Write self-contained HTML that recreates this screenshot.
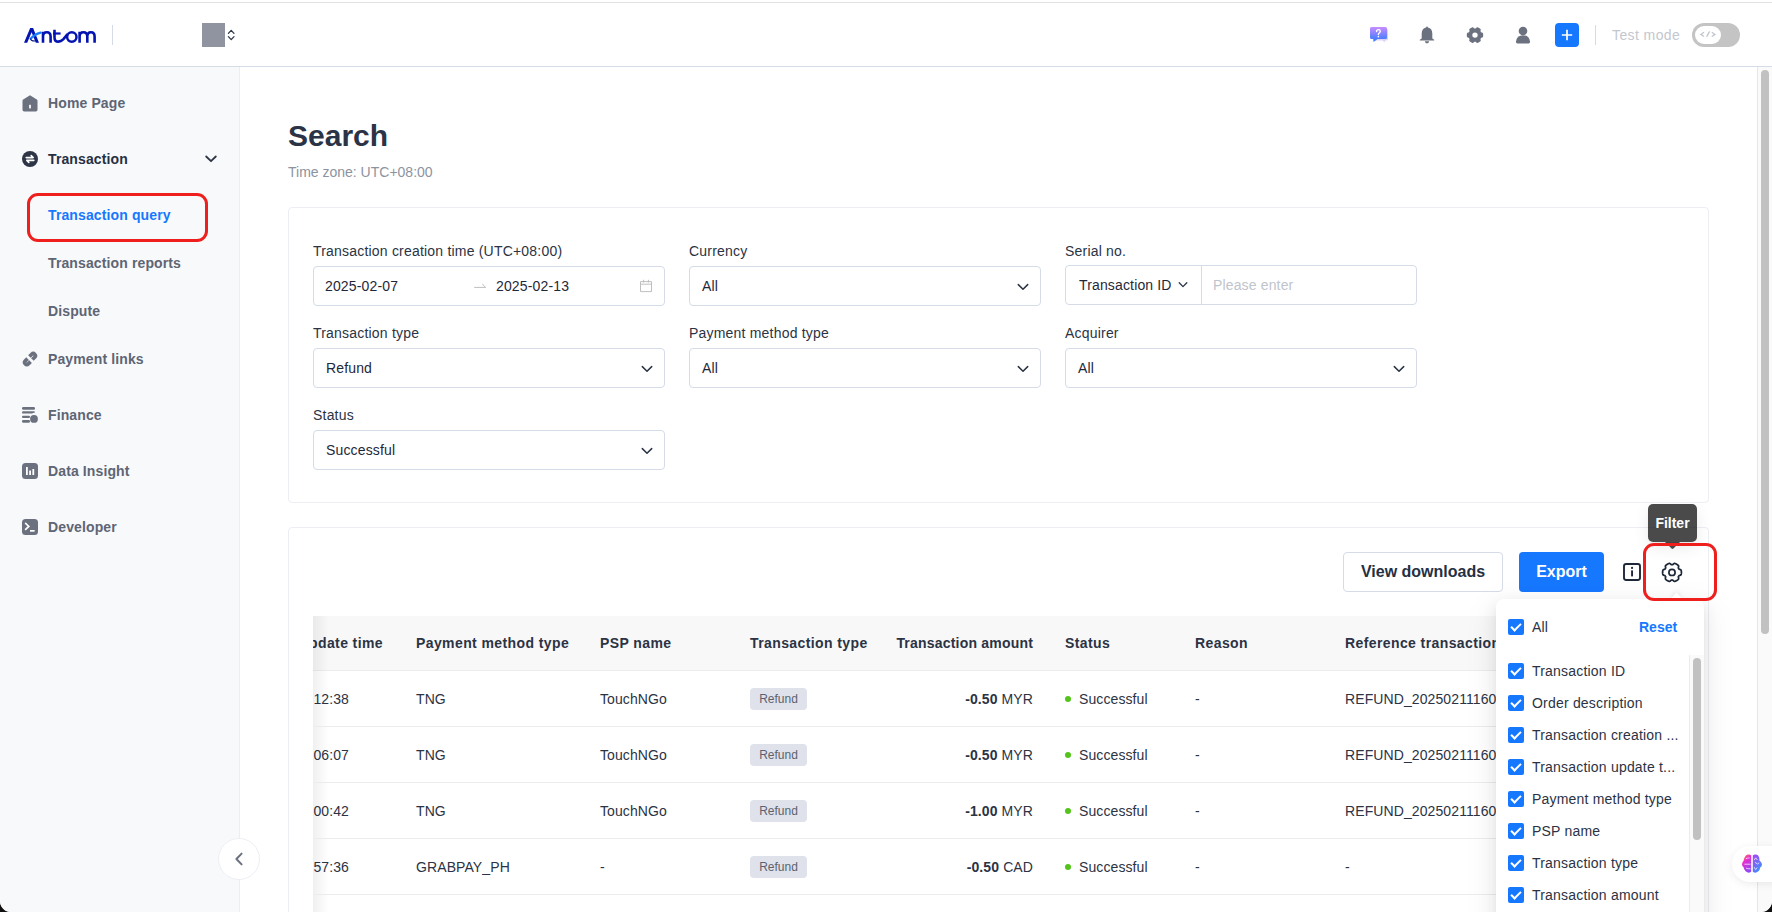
<!DOCTYPE html>
<html><head><meta charset="utf-8">
<style>
*{box-sizing:border-box;margin:0;padding:0}
html,body{width:1772px;height:912px;overflow:hidden;background:#111}
body{font-family:"Liberation Sans",sans-serif;color:#273142;position:relative}
.win{position:absolute;left:0;top:0;width:1772px;height:912px;background:#fff;border-radius:0 0 11px 11px;overflow:hidden}
.a{position:absolute;white-space:nowrap}
.t14{font-size:14px;line-height:22px}
.b{font-weight:bold}
svg{position:absolute;overflow:visible}
/* header */
.topline{position:absolute;left:0;top:2px;width:1772px;height:1px;background:#e0e2e0}
.hdr-border{position:absolute;left:0;top:66px;width:1772px;height:1px;background:#d6dce7}
/* sidebar */
.side{position:absolute;left:0;top:67px;width:240px;height:845px;background:#f8f9fb;border-right:1px solid #eceef2}
.nav{position:absolute;left:48px;letter-spacing:0.12px;font-size:14px;line-height:22px;font-weight:bold;color:#5e6574;white-space:nowrap}
/* inputs */
.inp{position:absolute;height:40px;border:1px solid #d5dce8;border-radius:4px;background:#fff}
.lbl{position:absolute;letter-spacing:0.2px;font-size:14px;line-height:22px;color:#2b3344;white-space:nowrap}
.val{position:absolute;letter-spacing:0.15px;font-size:14px;line-height:22px;color:#1f2838;white-space:nowrap}
.card{position:absolute;border:1px solid #eceef3;border-radius:4px;background:#fff}
.th{position:absolute;top:632px;letter-spacing:0.4px;font-size:14px;line-height:22px;font-weight:bold;color:#2b3344;white-space:nowrap}
.td{position:absolute;letter-spacing:0.1px;font-size:14px;line-height:22px;color:#2b3344;white-space:nowrap}
.tag{position:absolute;left:750px;width:57px;height:22px;background:#dfe2ea;border-radius:4px;font-size:12px;line-height:22px;color:#5b6270;text-align:center}
.dot{position:absolute;left:1065px;width:6px;height:6px;border-radius:50%;background:#52c41a}
.rowb{position:absolute;left:313px;width:1371px;height:1px;background:#ececee}
.cb{position:absolute;left:1508px;width:16px;height:16px;background:#1677ff;border-radius:2px}
.cb:after{content:"";position:absolute;left:3px;top:3.8px;width:8px;height:4px;border-left:2px solid #fff;border-bottom:2px solid #fff;transform:rotate(-45deg)}
.dl{position:absolute;left:1532px;letter-spacing:0.2px;font-size:14px;line-height:22px;color:#2b3344;white-space:nowrap}
</style></head>
<body><div class="win">
<div class="topline"></div>
<div class="hdr-border"></div>
<!-- logo -->
<svg style="left:0;top:0" width="110" height="60" viewBox="0 0 110 60">
<path d="M24 42.8 L30.2 28.1 H33.1 L39 42.8 H35.8 L31.6 32.3 L27.2 42.8 Z" fill="#0414b0"/>
<path d="M30.6 38.7 Q34.5 34.2 40.6 32.6" stroke="#1a7cff" stroke-width="2.2" fill="none" stroke-linecap="round"/>
<path d="M30.6 38.6 Q30.6 41.2 35.4 40.9" stroke="#051580" stroke-width="1.1" fill="none"/>
<path d="M43 42.8 V31.8 M43 36.4 Q43 32.2 46.8 32.2 Q50.6 32.2 50.6 36.4 V42.8" stroke="#0414b0" stroke-width="2.6" fill="none"/>
<path d="M54.5 29.8 V37.4 Q54.5 41.6 58.4 41.6 Q61 41.6 63.2 39.4 L67.6 34.2" stroke="#0414b0" stroke-width="2.6" fill="none"/>
<path d="M53 33.5 H60.6" stroke="#0414b0" stroke-width="2.2" fill="none"/>
<circle cx="71.8" cy="37" r="4.7" stroke="#0414b0" stroke-width="2.5" fill="none"/>
<path d="M79.6 42.8 V31.8 M79.6 36.4 Q79.6 32.2 83.4 32.2 Q87.3 32.2 87.3 36.4 V42.8 M87.3 36.4 Q87.3 32.2 91 32.2 Q94.6 32.2 94.6 36.4 V42.8" stroke="#0414b0" stroke-width="2.6" fill="none"/>
</svg>
<div style="position:absolute;left:112px;top:25px;width:1px;height:20px;background:#d6dce7"></div>
<div style="position:absolute;left:202px;top:23px;width:23px;height:24px;background:#9094a0"></div>
<svg style="left:226px;top:28px" width="10" height="14" viewBox="0 0 10 14"><path d="M2.4 5.4 L5.2 2.3 L8 5.4 M2.4 8.6 L5.2 11.7 L8 8.6" stroke="#303646" stroke-width="1.25" fill="none" stroke-linecap="round" stroke-linejoin="round"/></svg>
<!-- help icon -->
<svg style="left:1366px;top:22px" width="26" height="26" viewBox="0 0 26 26"><defs><linearGradient id="hg" x1="0" y1="0" x2="0" y2="1"><stop offset="0" stop-color="#c88cff"/><stop offset="1" stop-color="#2a7bff"/></linearGradient></defs>
<path d="M9 7 H20.6 Q22 7 22 8.4 V17.2 Q22 18.6 20.6 18.6 H19.4 L18.2 20.4 L16.8 18.6 H9Z" fill="#ddd2f6"/>
<path d="M5.5 5 H19.5 Q21 5 21 6.5 V15.4 Q21 16.9 19.5 16.9 H11.5 L7.6 20 L7.2 16.9 H5.5 Q4 16.9 4 15.4 V6.5 Q4 5 5.5 5Z" fill="url(#hg)"/>
<path d="M10.6 9.6 Q10.6 7.6 12.5 7.6 Q14.3 7.6 14.3 9.3 Q14.3 10.4 13.2 11 Q12.4 11.5 12.4 12.6" stroke="#fff" stroke-width="1.4" fill="none" stroke-linecap="round"/><circle cx="12.4" cy="14.6" r="0.85" fill="#fff"/></svg>
<!-- bell -->
<svg style="left:1419px;top:26px" width="16" height="18" viewBox="0 0 16 18"><path d="M8 0.6 Q8.9 0.6 8.9 1.6 Q13.3 2.6 13.3 7.6 V12.4 L15.2 13.8 Q15.6 14.3 15 14.5 H1 Q0.4 14.3 0.8 13.8 L2.7 12.4 V7.6 Q2.7 2.6 7.1 1.6 Q7.1 0.6 8 0.6Z" fill="#6b717e"/><path d="M5.8 15.3 H10.2 Q10 17.4 8 17.4 Q6 17.4 5.8 15.3Z" fill="#6b717e"/></svg>
<!-- gear solid -->
<svg style="left:1465px;top:25px" width="20" height="20" viewBox="0 0 20 20"><path d="M18.20 10.10 L18.20 9.89 L18.19 9.67 L18.17 9.46 L18.16 9.24 L18.13 9.03 L18.10 8.82 L18.06 8.61 L18.02 8.40 L17.95 8.19 L17.81 8.01 L17.60 7.85 L17.33 7.72 L17.01 7.62 L16.69 7.53 L16.39 7.45 L16.16 7.36 L16.05 7.22 L15.97 7.06 L15.89 6.90 L15.80 6.75 L15.71 6.60 L15.62 6.45 L15.52 6.31 L15.46 6.13 L15.49 5.89 L15.57 5.59 L15.66 5.27 L15.72 4.95 L15.75 4.65 L15.72 4.38 L15.63 4.17 L15.49 4.01 L15.33 3.86 L15.16 3.73 L14.99 3.59 L14.82 3.47 L14.64 3.34 L14.47 3.22 L14.28 3.11 L14.10 3.00 L13.91 2.89 L13.72 2.79 L13.53 2.70 L13.34 2.61 L13.14 2.52 L12.94 2.44 L12.74 2.37 L12.53 2.30 L12.32 2.26 L12.09 2.29 L11.85 2.39 L11.60 2.57 L11.36 2.78 L11.12 3.02 L10.90 3.24 L10.71 3.39 L10.53 3.42 L10.35 3.41 L10.18 3.40 L10.00 3.40 L9.82 3.40 L9.65 3.41 L9.47 3.42 L9.29 3.39 L9.10 3.24 L8.88 3.02 L8.64 2.78 L8.40 2.57 L8.15 2.39 L7.91 2.29 L7.68 2.26 L7.47 2.30 L7.26 2.37 L7.06 2.44 L6.86 2.52 L6.66 2.61 L6.47 2.70 L6.28 2.79 L6.09 2.89 L5.90 3.00 L5.72 3.11 L5.53 3.22 L5.36 3.34 L5.18 3.47 L5.01 3.59 L4.84 3.73 L4.67 3.86 L4.51 4.01 L4.37 4.17 L4.28 4.38 L4.25 4.65 L4.28 4.95 L4.34 5.27 L4.43 5.59 L4.51 5.89 L4.54 6.13 L4.48 6.31 L4.38 6.45 L4.29 6.60 L4.20 6.75 L4.11 6.90 L4.03 7.06 L3.95 7.22 L3.84 7.36 L3.61 7.45 L3.31 7.53 L2.99 7.62 L2.67 7.72 L2.40 7.85 L2.19 8.01 L2.05 8.19 L1.98 8.40 L1.94 8.61 L1.90 8.82 L1.87 9.03 L1.84 9.24 L1.83 9.46 L1.81 9.67 L1.80 9.89 L1.80 10.10 L1.80 10.31 L1.81 10.53 L1.83 10.74 L1.84 10.96 L1.87 11.17 L1.90 11.38 L1.94 11.59 L1.98 11.80 L2.05 12.01 L2.19 12.19 L2.40 12.35 L2.67 12.48 L2.99 12.58 L3.31 12.67 L3.61 12.75 L3.84 12.84 L3.95 12.98 L4.03 13.14 L4.11 13.30 L4.20 13.45 L4.29 13.60 L4.38 13.75 L4.48 13.89 L4.54 14.07 L4.51 14.31 L4.43 14.61 L4.34 14.93 L4.28 15.25 L4.25 15.55 L4.28 15.82 L4.37 16.03 L4.51 16.19 L4.67 16.34 L4.84 16.47 L5.01 16.61 L5.18 16.73 L5.36 16.86 L5.53 16.98 L5.72 17.09 L5.90 17.20 L6.09 17.31 L6.28 17.41 L6.47 17.50 L6.66 17.59 L6.86 17.68 L7.06 17.76 L7.26 17.83 L7.47 17.90 L7.68 17.94 L7.91 17.91 L8.15 17.81 L8.40 17.63 L8.64 17.42 L8.88 17.18 L9.10 16.96 L9.29 16.81 L9.47 16.78 L9.65 16.79 L9.82 16.80 L10.00 16.80 L10.18 16.80 L10.35 16.79 L10.53 16.78 L10.71 16.81 L10.90 16.96 L11.12 17.18 L11.36 17.42 L11.60 17.63 L11.85 17.81 L12.09 17.91 L12.32 17.94 L12.53 17.90 L12.74 17.83 L12.94 17.76 L13.14 17.68 L13.34 17.59 L13.53 17.50 L13.72 17.41 L13.91 17.31 L14.10 17.20 L14.28 17.09 L14.47 16.98 L14.64 16.86 L14.82 16.73 L14.99 16.61 L15.16 16.47 L15.33 16.34 L15.49 16.19 L15.63 16.03 L15.72 15.82 L15.75 15.55 L15.72 15.25 L15.66 14.93 L15.57 14.61 L15.49 14.31 L15.46 14.07 L15.52 13.89 L15.62 13.75 L15.71 13.60 L15.80 13.45 L15.89 13.30 L15.97 13.14 L16.05 12.98 L16.16 12.84 L16.39 12.75 L16.69 12.67 L17.01 12.58 L17.33 12.48 L17.60 12.35 L17.81 12.19 L17.95 12.01 L18.02 11.80 L18.06 11.59 L18.10 11.38 L18.13 11.17 L18.16 10.96 L18.17 10.74 L18.19 10.53 L18.20 10.31Z" fill="#6b717e"/><circle cx="10" cy="10.1" r="2.7" fill="#fff"/></svg>
<!-- user -->
<svg style="left:1515px;top:26px" width="16" height="18" viewBox="0 0 16 18"><circle cx="8" cy="5" r="4.3" fill="#6b717e"/><path d="M8 9.2 Q14.2 9.2 15 15.6 Q15.2 17.4 13.6 17.4 H2.4 Q0.8 17.4 1 15.6 Q1.8 9.2 8 9.2Z" fill="#6b717e"/></svg>
<!-- plus -->
<div style="position:absolute;left:1555px;top:23px;width:24px;height:24px;background:#1677ff;border-radius:4px"></div>
<svg style="left:1555px;top:23px" width="24" height="24" viewBox="0 0 24 24"><path d="M12 6.8 V17.2 M6.8 12 H17.2" stroke="#fff" stroke-width="1.7"/></svg>
<div style="position:absolute;left:1595px;top:25px;width:1px;height:20px;background:#d6dce7"></div>
<div class="a t14" style="left:1612px;top:24px;color:#c3c7cf;letter-spacing:0.4px">Test mode</div>
<div style="position:absolute;left:1692px;top:23px;width:48px;height:24px;background:#c4c4c4;border-radius:12px"></div>
<div style="position:absolute;left:1695px;top:26px;width:26px;height:18px;background:#fff;border-radius:9px"></div>
<svg style="left:1699px;top:30px" width="18" height="10" viewBox="0 0 18 10"><path d="M4.6 2.5 L1.9 4.4 L4.6 6.2 M13.2 2.5 L15.9 4.4 L13.2 6.2 M10.3 1.9 L7.9 6.4" stroke="#c2c6cd" stroke-width="1.3" fill="none" stroke-linecap="round"/></svg>

<!-- SIDEBAR -->
<div class="side"></div>
<!-- home icon -->
<svg style="left:22px;top:95px" width="16" height="17" viewBox="0 0 16 17"><path d="M8 0.2 L14.8 4.4 Q15.5 4.9 15.5 5.8 V14.8 Q15.5 16.5 13.8 16.5 H2.2 Q0.5 16.5 0.5 14.8 V5.8 Q0.5 4.9 1.2 4.4 Z" fill="#6b717e"/><rect x="7.1" y="9.8" width="1.8" height="3.6" fill="#f8f9fb"/></svg>
<div class="nav" style="top:92px">Home Page</div>
<!-- transaction icon -->
<svg style="left:22px;top:151px" width="16" height="16" viewBox="0 0 16 16"><circle cx="8" cy="8" r="8" fill="#2e3546"/><path d="M4.2 6.6 H11.2 L9.2 4.6" stroke="#fff" stroke-width="1.6" fill="none" stroke-linecap="round" stroke-linejoin="round"/><path d="M11.8 9.4 H4.8 L6.8 11.4" stroke="#fff" stroke-width="1.6" fill="none" stroke-linecap="round" stroke-linejoin="round"/></svg>
<div class="nav" style="top:148px;color:#263043">Transaction</div>
<svg style="left:205px;top:155px" width="12" height="8" viewBox="0 0 12 8"><path d="M1.2 1.5 L6 6.2 L10.8 1.5" stroke="#2e3546" stroke-width="1.8" fill="none" stroke-linecap="round" stroke-linejoin="round"/></svg>
<div style="position:absolute;left:26.6px;top:193.4px;width:181px;height:48.6px;border:3.2px solid #ee1f1c;border-radius:11px"></div>
<div class="nav" style="top:204px;color:#1677ff">Transaction query</div>
<div class="nav" style="top:252px">Transaction reports</div>
<div class="nav" style="top:300px">Dispute</div>
<!-- link icon -->
<svg style="left:22px;top:351px" width="16" height="16" viewBox="0 0 16 16"><g fill="none" stroke="#6b717e" stroke-width="3.7"><path transform="translate(11.2 4.7) rotate(45)" d="M-2.1 3.2 V0 A2.1 2.1 0 0 1 2.1 0 V3.2"/><path transform="translate(4.8 11.4) rotate(225)" d="M-2.1 3.2 V0 A2.1 2.1 0 0 1 2.1 0 V3.2"/></g></svg>
<div class="nav" style="top:348px">Payment links</div>
<!-- finance icon -->
<svg style="left:22px;top:407px" width="16" height="16" viewBox="0 0 16 16"><rect x="0" y="0" width="13" height="2.7" rx="1.3" fill="#6b717e"/><path d="M1.3 4.2 H11.7 Q13 4.2 13 5.4 Q11 5.6 9.8 6.6 H1.3 Q0 6.6 0 5.4 Q0 4.2 1.3 4.2Z" fill="#6b717e"/><rect x="0" y="8.8" width="8" height="2.1" rx="1" fill="#6b717e"/><rect x="0" y="13" width="8" height="2.7" rx="1.3" fill="#6b717e"/><circle cx="12" cy="11.9" r="3.9" fill="#6b717e"/></svg>
<div class="nav" style="top:404px">Finance</div>
<!-- data insight icon -->
<svg style="left:22px;top:463px" width="16" height="16" viewBox="0 0 16 16"><rect x="0" y="0" width="16" height="16" rx="3.5" fill="#6b717e"/><rect x="4" y="4" width="1.8" height="8" fill="#fff"/><rect x="7.2" y="7.5" width="1.8" height="4.5" fill="#fff"/><rect x="10.4" y="6" width="1.8" height="6" fill="#fff"/></svg>
<div class="nav" style="top:460px">Data Insight</div>
<!-- developer icon -->
<svg style="left:22px;top:519px" width="16" height="16" viewBox="0 0 16 16"><rect x="0" y="0" width="16" height="16" rx="3.5" fill="#6b717e"/><path d="M3.6 4.4 L6.8 7.4 L3.6 10.4" stroke="#fff" stroke-width="1.7" fill="none" stroke-linecap="round"/><rect x="8" y="11" width="4.6" height="1.7" fill="#fff"/></svg>
<div class="nav" style="top:516px">Developer</div>
<!-- collapse button -->
<div style="position:absolute;left:218px;top:838px;width:42px;height:42px;border-radius:50%;background:#fff;border:1px solid #eceef3"></div>
<svg style="left:234px;top:852px" width="10" height="14" viewBox="0 0 10 14"><path d="M7.6 1.6 L2.4 7 L7.6 12.4" stroke="#6b717e" stroke-width="2" fill="none" stroke-linecap="round" stroke-linejoin="round"/></svg>

<!-- MAIN -->
<div class="a b" style="left:288px;top:116px;font-size:30px;line-height:40px;color:#2b3346">Search</div>
<div class="a t14" style="left:288px;top:161px;color:#8c939f">Time zone: UTC+08:00</div>
<div class="card" style="left:288px;top:207px;width:1421px;height:296px"></div>
<div class="lbl" style="left:313px;top:240px">Transaction creation time (UTC+08:00)</div>
<div class="inp" style="left:313px;top:266px;width:352px"></div>
<div class="val" style="left:325px;top:275px">2025-02-07</div>
<svg style="left:472px;top:281px" width="16" height="10" viewBox="0 0 16 10"><path d="M2.2 6.4 H13.7 L10.2 3" stroke="#bfbfbf" stroke-width="1" fill="none"/></svg>
<div class="val" style="left:496px;top:275px">2025-02-13</div>
<svg style="left:639px;top:279px" width="14" height="14" viewBox="0 0 14 14"><path d="M1.5 2.6 H12.5 V12.6 H1.5 Z M1.5 5.2 H12.5 M4.6 0.8 V3.6 M9.4 0.8 V3.6" stroke="#bfbfbf" stroke-width="1" fill="none"/></svg>
<div class="lbl" style="left:689px;top:240px">Currency</div>
<div class="inp" style="left:689px;top:266px;width:352px"></div>
<div class="val" style="left:702px;top:275px">All</div>
<svg style="left:1017px;top:283px" width="12" height="8" viewBox="0 0 12 8"><path d="M1.3 1.6 L6 6.2 L10.7 1.6" stroke="#2b3344" stroke-width="1.5" fill="none" stroke-linecap="round" stroke-linejoin="round"/></svg>
<div class="lbl" style="left:1065px;top:240px">Serial no.</div>
<div class="inp" style="left:1065px;top:265px;width:352px"></div>
<div style="position:absolute;left:1201px;top:266px;width:1px;height:38px;background:#d5dce8"></div>
<div class="val" style="left:1079px;top:274px">Transaction ID</div>
<svg style="left:1178px;top:281px" width="10" height="8" viewBox="0 0 10 8"><path d="M1.2 1.8 L5 5.6 L8.8 1.8" stroke="#2b3344" stroke-width="1.3" fill="none" stroke-linecap="round" stroke-linejoin="round"/></svg>
<div class="val" style="left:1213px;top:274px;color:#c0c4cc">Please enter</div>

<div class="lbl" style="left:313px;top:322px">Transaction type</div>
<div class="inp" style="left:313px;top:348px;width:352px"></div>
<div class="val" style="left:326px;top:357px">Refund</div>
<svg style="left:641px;top:365px" width="12" height="8" viewBox="0 0 12 8"><path d="M1.3 1.6 L6 6.2 L10.7 1.6" stroke="#2b3344" stroke-width="1.5" fill="none" stroke-linecap="round" stroke-linejoin="round"/></svg>
<div class="lbl" style="left:689px;top:322px">Payment method type</div>
<div class="inp" style="left:689px;top:348px;width:352px"></div>
<div class="val" style="left:702px;top:357px">All</div>
<svg style="left:1017px;top:365px" width="12" height="8" viewBox="0 0 12 8"><path d="M1.3 1.6 L6 6.2 L10.7 1.6" stroke="#2b3344" stroke-width="1.5" fill="none" stroke-linecap="round" stroke-linejoin="round"/></svg>
<div class="lbl" style="left:1065px;top:322px">Acquirer</div>
<div class="inp" style="left:1065px;top:348px;width:352px"></div>
<div class="val" style="left:1078px;top:357px">All</div>
<svg style="left:1393px;top:365px" width="12" height="8" viewBox="0 0 12 8"><path d="M1.3 1.6 L6 6.2 L10.7 1.6" stroke="#2b3344" stroke-width="1.5" fill="none" stroke-linecap="round" stroke-linejoin="round"/></svg>
<div class="lbl" style="left:313px;top:404px">Status</div>
<div class="inp" style="left:313px;top:430px;width:352px"></div>
<div class="val" style="left:326px;top:439px">Successful</div>
<svg style="left:641px;top:447px" width="12" height="8" viewBox="0 0 12 8"><path d="M1.3 1.6 L6 6.2 L10.7 1.6" stroke="#2b3344" stroke-width="1.5" fill="none" stroke-linecap="round" stroke-linejoin="round"/></svg>
<!-- table card -->
<div class="card" style="left:288px;top:527px;width:1421px;height:420px"></div>
<div style="position:absolute;left:1343px;top:552px;width:160px;height:40px;border:1px solid #d5dce8;border-radius:4px;background:#fff"></div>
<div class="a b" style="left:1343px;top:560px;width:160px;text-align:center;font-size:16px;line-height:24px;color:#263043">View downloads</div>
<div style="position:absolute;left:1519px;top:552px;width:85px;height:40px;border-radius:4px;background:#1677ff"></div>
<div class="a b" style="left:1519px;top:560px;width:85px;text-align:center;font-size:16px;line-height:24px;color:#fff">Export</div>
<svg style="left:1622px;top:562px" width="20" height="20" viewBox="0 0 20 20"><rect x="2" y="2" width="16" height="16" rx="2.2" stroke="#1f2838" stroke-width="1.9" fill="none"/><rect x="9.1" y="8.4" width="1.9" height="6" fill="#1f2838"/><circle cx="10.05" cy="5.9" r="1.1" fill="#1f2838"/></svg>
<svg style="left:1662px;top:562px" width="20" height="20" viewBox="0 0 20 20"><path d="M19.40 10.40 L19.40 10.15 L19.39 9.91 L19.37 9.66 L19.35 9.42 L19.32 9.17 L19.28 8.93 L19.24 8.69 L19.19 8.45 L19.12 8.21 L18.97 8.00 L18.76 7.81 L18.48 7.65 L18.15 7.51 L17.80 7.41 L17.46 7.31 L17.17 7.21 L16.96 7.08 L16.86 6.90 L16.77 6.73 L16.67 6.55 L16.57 6.38 L16.46 6.21 L16.36 6.03 L16.35 5.79 L16.41 5.48 L16.49 5.14 L16.57 4.79 L16.62 4.44 L16.62 4.11 L16.57 3.83 L16.46 3.60 L16.29 3.41 L16.10 3.25 L15.92 3.09 L15.72 2.94 L15.53 2.80 L15.32 2.65 L15.12 2.52 L14.91 2.39 L14.70 2.26 L14.49 2.14 L14.27 2.02 L14.05 1.92 L13.82 1.81 L13.60 1.72 L13.37 1.62 L13.14 1.54 L12.90 1.46 L12.66 1.41 L12.40 1.43 L12.13 1.52 L11.85 1.68 L11.58 1.90 L11.31 2.15 L11.05 2.39 L10.82 2.60 L10.61 2.71 L10.40 2.71 L10.20 2.70 L10.00 2.70 L9.80 2.70 L9.60 2.71 L9.39 2.71 L9.18 2.60 L8.95 2.39 L8.69 2.15 L8.42 1.90 L8.15 1.68 L7.87 1.52 L7.60 1.43 L7.34 1.41 L7.10 1.46 L6.86 1.54 L6.63 1.62 L6.40 1.72 L6.18 1.81 L5.95 1.92 L5.73 2.02 L5.51 2.14 L5.30 2.26 L5.09 2.39 L4.88 2.52 L4.68 2.65 L4.47 2.80 L4.28 2.94 L4.08 3.09 L3.90 3.25 L3.71 3.41 L3.54 3.60 L3.43 3.83 L3.38 4.11 L3.38 4.44 L3.43 4.79 L3.51 5.14 L3.59 5.48 L3.65 5.79 L3.64 6.03 L3.54 6.21 L3.43 6.38 L3.33 6.55 L3.23 6.73 L3.14 6.90 L3.04 7.08 L2.83 7.21 L2.54 7.31 L2.20 7.41 L1.85 7.51 L1.52 7.65 L1.24 7.81 L1.03 8.00 L0.88 8.21 L0.81 8.45 L0.76 8.69 L0.72 8.93 L0.68 9.17 L0.65 9.42 L0.63 9.66 L0.61 9.91 L0.60 10.15 L0.60 10.40 L0.60 10.65 L0.61 10.89 L0.63 11.14 L0.65 11.38 L0.68 11.63 L0.72 11.87 L0.76 12.11 L0.81 12.35 L0.88 12.59 L1.03 12.80 L1.24 12.99 L1.52 13.15 L1.85 13.29 L2.20 13.39 L2.54 13.49 L2.83 13.59 L3.04 13.72 L3.14 13.90 L3.23 14.07 L3.33 14.25 L3.43 14.42 L3.54 14.59 L3.64 14.77 L3.65 15.01 L3.59 15.32 L3.51 15.66 L3.43 16.01 L3.38 16.36 L3.38 16.69 L3.43 16.97 L3.54 17.20 L3.71 17.39 L3.90 17.55 L4.08 17.71 L4.28 17.86 L4.47 18.00 L4.68 18.15 L4.88 18.28 L5.09 18.41 L5.30 18.54 L5.51 18.66 L5.73 18.78 L5.95 18.88 L6.18 18.99 L6.40 19.08 L6.63 19.18 L6.86 19.26 L7.10 19.34 L7.34 19.39 L7.60 19.37 L7.87 19.28 L8.15 19.12 L8.42 18.90 L8.69 18.65 L8.95 18.41 L9.18 18.20 L9.39 18.09 L9.60 18.09 L9.80 18.10 L10.00 18.10 L10.20 18.10 L10.40 18.09 L10.61 18.09 L10.82 18.20 L11.05 18.41 L11.31 18.65 L11.58 18.90 L11.85 19.12 L12.13 19.28 L12.40 19.37 L12.66 19.39 L12.90 19.34 L13.14 19.26 L13.37 19.18 L13.60 19.08 L13.82 18.99 L14.05 18.88 L14.27 18.78 L14.49 18.66 L14.70 18.54 L14.91 18.41 L15.12 18.28 L15.32 18.15 L15.53 18.00 L15.72 17.86 L15.92 17.71 L16.10 17.55 L16.29 17.39 L16.46 17.20 L16.57 16.97 L16.62 16.69 L16.62 16.36 L16.57 16.01 L16.49 15.66 L16.41 15.32 L16.35 15.01 L16.36 14.77 L16.46 14.59 L16.57 14.42 L16.67 14.25 L16.77 14.07 L16.86 13.90 L16.96 13.72 L17.17 13.59 L17.46 13.49 L17.80 13.39 L18.15 13.29 L18.48 13.15 L18.76 12.99 L18.97 12.80 L19.12 12.59 L19.19 12.35 L19.24 12.11 L19.28 11.87 L19.32 11.63 L19.35 11.38 L19.37 11.14 L19.39 10.89 L19.40 10.65Z" stroke="#1f2838" stroke-width="1.75" fill="none" stroke-linejoin="round"/><circle cx="10" cy="10.4" r="3.1" stroke="#1f2838" stroke-width="1.7" fill="none"/></svg>

<!-- table -->
<div style="position:absolute;left:313px;top:616px;width:1371px;height:54px;background:#f8f8f9"></div>
<div class="rowb" style="top:670px"></div>
<div style="position:absolute;left:313px;top:616px;width:80px;height:300px;overflow:hidden">
<div class="th" style="left:auto;right:10px;top:16px">Transaction update time</div>
<div class="td" style="left:auto;right:44px;top:72px">2025-02-11 16:12:38</div>
<div class="td" style="left:auto;right:44px;top:128px">2025-02-11 16:06:07</div>
<div class="td" style="left:auto;right:44px;top:184px">2025-02-11 16:00:42</div>
<div class="td" style="left:auto;right:44px;top:240px">2025-02-11 16:57:36</div>
</div>
<div style="position:absolute;left:313px;top:616px;width:16px;height:300px;background:linear-gradient(90deg,rgba(0,0,0,0.06),rgba(0,0,0,0))"></div>
<div class="th" style="left:416px">Payment method type</div>
<div class="th" style="left:600px">PSP name</div>
<div class="th" style="left:750px">Transaction type</div>
<div class="th" style="left:auto;right:739px;letter-spacing:0.2px">Transaction amount</div>
<div class="th" style="left:1065px">Status</div>
<div class="th" style="left:1195px">Reason</div>
<div class="th" style="left:1345px">Reference transaction ID</div>
<div class="rowb" style="top:726px"></div>
<div class="td" style="left:416px;top:688px">TNG</div>
<div class="td" style="left:600px;top:688px">TouchNGo</div>
<div class="tag" style="top:688px">Refund</div>
<div class="td" style="left:auto;right:739px;top:688px"><b>-0.50</b> MYR</div>
<div class="dot" style="top:696px"></div>
<div class="td" style="left:1079px;top:688px">Successful</div>
<div class="td" style="left:1195px;top:688px">-</div>
<div class="td" style="left:1345px;top:688px">REFUND_20250211160012</div>
<div class="rowb" style="top:782px"></div>
<div class="td" style="left:416px;top:744px">TNG</div>
<div class="td" style="left:600px;top:744px">TouchNGo</div>
<div class="tag" style="top:744px">Refund</div>
<div class="td" style="left:auto;right:739px;top:744px"><b>-0.50</b> MYR</div>
<div class="dot" style="top:752px"></div>
<div class="td" style="left:1079px;top:744px">Successful</div>
<div class="td" style="left:1195px;top:744px">-</div>
<div class="td" style="left:1345px;top:744px">REFUND_20250211160012</div>
<div class="rowb" style="top:838px"></div>
<div class="td" style="left:416px;top:800px">TNG</div>
<div class="td" style="left:600px;top:800px">TouchNGo</div>
<div class="tag" style="top:800px">Refund</div>
<div class="td" style="left:auto;right:739px;top:800px"><b>-1.00</b> MYR</div>
<div class="dot" style="top:808px"></div>
<div class="td" style="left:1079px;top:800px">Successful</div>
<div class="td" style="left:1195px;top:800px">-</div>
<div class="td" style="left:1345px;top:800px">REFUND_20250211160012</div>
<div class="rowb" style="top:894px"></div>
<div class="td" style="left:416px;top:856px">GRABPAY_PH</div>
<div class="td" style="left:600px;top:856px">-</div>
<div class="tag" style="top:856px">Refund</div>
<div class="td" style="left:auto;right:739px;top:856px"><b>-0.50</b> CAD</div>
<div class="dot" style="top:864px"></div>
<div class="td" style="left:1079px;top:856px">Successful</div>
<div class="td" style="left:1195px;top:856px">-</div>
<div class="td" style="left:1345px;top:856px">-</div>
<!-- dropdown -->
<div style="position:absolute;left:1496px;top:599px;width:208px;height:340px;background:#fff;border-radius:8px;box-shadow:0 3px 6px -4px rgba(0,0,0,.12),0 6px 16px 0 rgba(0,0,0,.08),0 9px 28px 8px rgba(0,0,0,.05)"></div>
<svg style="left:1669px;top:591px" width="16" height="9" viewBox="0 0 16 9"><path d="M2 8 L7.5 1.2 L13 8Z" fill="#fff" style="filter:drop-shadow(0 -1px 2px rgba(0,0,0,0.1))"/></svg>
<div class="cb" style="top:619px"></div>
<div class="dl" style="top:616px">All</div>
<div class="a b t14" style="left:1639px;top:616px;color:#1677ff">Reset</div>
<div style="position:absolute;left:1689px;top:655px;width:15px;height:300px;background:#fafafa;border-left:1px solid #ececec"></div>
<div style="position:absolute;left:1693px;top:658px;width:8px;height:182px;background:#c1c1c1;border-radius:4px"></div>
<div class="cb" style="top:663px"></div><div class="dl" style="top:660px">Transaction ID</div>
<div class="cb" style="top:695px"></div><div class="dl" style="top:692px">Order description</div>
<div class="cb" style="top:727px"></div><div class="dl" style="top:724px">Transaction creation ...</div>
<div class="cb" style="top:759px"></div><div class="dl" style="top:756px">Transaction update t...</div>
<div class="cb" style="top:791px"></div><div class="dl" style="top:788px">Payment method type</div>
<div class="cb" style="top:823px"></div><div class="dl" style="top:820px">PSP name</div>
<div class="cb" style="top:855px"></div><div class="dl" style="top:852px">Transaction type</div>
<div class="cb" style="top:887px"></div><div class="dl" style="top:884px">Transaction amount</div>
<div class="cb" style="top:919px"></div><div class="dl" style="top:916px">Status</div>
<!-- tooltip -->
<div style="position:absolute;left:1648px;top:504px;width:49px;height:38px;background:rgba(0,0,0,0.71);border-radius:5px;box-shadow:0 3px 6px -4px rgba(0,0,0,.12),0 6px 16px 0 rgba(0,0,0,.08)"></div>
<svg style="left:1664px;top:541px" width="18" height="9" viewBox="0 0 18 9"><path d="M1 1 L7.6 7.6 Q8.5 8.4 9.4 7.6 L16 1Z" fill="rgba(0,0,0,0.71)"/></svg>
<div class="a b" style="left:1648px;top:512px;width:49px;text-align:center;font-size:14px;line-height:22px;color:#fff">Filter</div>
<div style="position:absolute;left:1643px;top:543px;width:74px;height:58px;border:3.3px solid #ee1f1c;border-radius:11px"></div>
<!-- page scrollbar -->
<div style="position:absolute;left:1757px;top:67px;width:15px;height:845px;background:#fafafa;border-left:1px solid #e6e6e6"></div>
<div style="position:absolute;left:1761px;top:70px;width:8px;height:564px;background:#c1c1c1;border-radius:4px"></div>
<!-- AI pill -->
<div style="position:absolute;left:1732px;top:846px;width:60px;height:36px;background:#fff;border-radius:18px;box-shadow:0 2px 8px rgba(0,0,0,0.08)"></div>
<svg style="left:1742px;top:854px" width="20" height="20" viewBox="0 0 20 20"><defs><linearGradient id="bg1" x1="0.1" y1="0" x2="0.6" y2="1"><stop offset="0" stop-color="#ff9a2e"/><stop offset="0.38" stop-color="#e82ed0"/><stop offset="1" stop-color="#8f4af2"/></linearGradient><linearGradient id="bg2" x1="0.2" y1="0" x2="0.9" y2="1"><stop offset="0" stop-color="#a548f2"/><stop offset="1" stop-color="#2f9bff"/></linearGradient></defs>
<path d="M9.2 1.4 Q7.8 0 5.6 0.6 Q3.4 1.2 2.4 3.8 Q1.6 5.6 1.6 6.8 Q0 8.4 0 10.4 Q0 12.2 1.6 13.2 Q1.8 15.6 3.6 17.2 Q5.4 18.9 7.4 18.6 Q8.8 18.2 9.2 17.4 Z" fill="url(#bg1)"/>
<path d="M10.8 1.4 Q12.2 0 14.4 0.6 Q16.6 1.2 17.2 3.6 Q17.6 5.4 17.4 6.6 Q20 8.4 20 10.6 Q20 12.6 18.2 13.6 Q18 15.8 16.4 17.2 Q14.6 18.9 12.6 18.6 Q11.2 18.2 10.8 17.4 Z" fill="url(#bg2)"/>
<path d="M3.8 4.8 Q5 4 7.6 3.9 M2.4 10.2 H8.6 M4 14 Q5.4 15 8.6 14.8 M12.2 6.2 L13.6 3.8 L15.4 6 M13 8.2 L15.4 10 L17.2 8.8 M12.2 13.2 L13.6 15.6 L15.2 13.6" stroke="#fff" stroke-width="0.9" fill="none" opacity="0.8"/></svg>
</div></body></html>
